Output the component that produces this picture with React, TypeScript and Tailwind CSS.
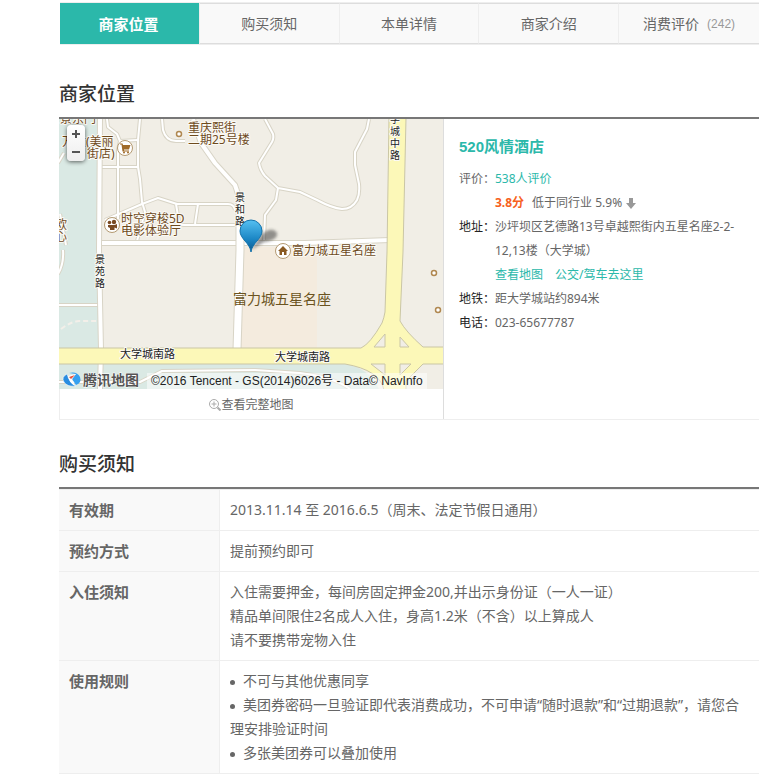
import type { ReactNode } from "react";

const tabs = ["商家位置", "购买须知", "本单详情", "商家介绍", "消费评价"];

const BROWN = "#6e4a1c";

const minorRoads = [
  "M107 119 L108 127 L117 134 L120 141 L118 150 V219",
  "M120 141 L138 140",
  "M102 167 H138",
  "M140 119 L138 140 V167 L140 179 L142 202 L145 212 L137 241",
  "M105 220 L142 204 L158 198 L177 204 H228 Q234 204 235 210",
  "M176 204 L179 222 Q180 225 184 225 H237",
  "M198 204 L195 224",
  "M162 119 L163 130 Q166 141 176 141 L185 141",
  "M265 119 L273 134 Q274 139 272 142 L259 163 Q260 170 265 176 L278 188 L300 192 L317 200 Q332 208 342 209 Q352 209 357 200 Q360 194 359 184 L355 165 V152 L367 129 L369 119",
  "M278 188 L276 200 L265 215 L264 241",
  "M59 305 H99",
  "M63 250 Q64 264 58 274",
  "M58 163 L64 153",
  "M60 214 L66 245",
  "M59 382 H140 L162 371 L255 370 L300 373 Q334 377 350 389",
];

function MapLabel({ x, y, size = 12, color = BROWN, children }: { x: number; y: number; size?: number; color?: string; children: ReactNode }) {
  return (
    <text x={x} y={y} fontSize={size} fill={color} stroke="#fbfaf5" strokeWidth="2" strokeLinejoin="round" paintOrder="stroke">
      {children}
    </text>
  );
}

function VerticalLabel({ x, y, text }: { x: number; y: number; text: string }) {
  return (
    <>
      {text.split("").map((ch, i) => (
        <MapLabel key={i} x={x} y={y + i * 12} size={10} color="#222">
          {ch}
        </MapLabel>
      ))}
    </>
  );
}

function Roads({ paths, width }: { paths: string[]; width: number }) {
  return (
    <g fill="none" strokeLinejoin="round">
      {paths.map((d) => (
        <path key={d} d={d} stroke="#d8d4c6" strokeWidth={width + 2} />
      ))}
      {paths.map((d) => (
        <path key={d} d={d} stroke="#fff" strokeWidth={width} />
      ))}
    </g>
  );
}

function CityMap() {
  return (
    <svg viewBox="59 119 384 270" className="block w-full" role="img" aria-label="地图">
      <defs>
        <linearGradient id="pin" x1="0" y1="0" x2="0" y2="1">
          <stop offset="0" stopColor="#56c0f2" />
          <stop offset="0.6" stopColor="#1b86c4" />
          <stop offset="1" stopColor="#0a568c" />
        </linearGradient>
        <filter id="soft" x="-50%" y="-50%" width="200%" height="200%">
          <feGaussianBlur stdDeviation="1.5" />
        </filter>
      </defs>
      <rect x="59" y="119" width="384" height="270" fill="#f1eee6" />
      <rect x="59" y="119" width="40" height="270" fill="#dae9e4" />
      <path d="M59 363 H342 Q370 368 379 389 H59 Z" fill="#dae9e4" />
      <path d="M243 247 H317 V348 H240 Z" fill="#f4ebde" />
      <Roads paths={minorRoads} width={2} />
      <path d="M61 329 Q70 322 79 321 H97" fill="none" stroke="#f3efe9" strokeWidth="2" strokeDasharray="5 3" />
      <Roads
        paths={[
          "M193 119 L201 143 L215 163 L235 185 L240 200",
          "M100 119 L99 250 L101 350 L100 389",
          "M102 243 H305 L390 240",
        ]}
        width={4}
      />
      <Roads paths={["M240 198 L240 250 L237 350"]} width={7} />

      <g fill="#fcf8b8" stroke="#cac6a5">
        <path d="M389 118 H406 L403 252 L400 321 Q406 332 423 347 H444 V364 H423 L406 381 V390 H384 Q380 370 345 364 H58 V348 H361 Q370 344 382 323 Q384 318 385 312 L387 252 Z" />
        <g fill="#f1eee6">
          <path d="M374 347 L385 334 V347 Z" />
          <path d="M400 337 L409 347 H400 Z" />
          <path d="M371 364 H385 V375 Z" />
          <path d="M400 364 H411 L400 375 Z" />
        </g>
      </g>

      <g fontFamily='"Noto Sans", "Noto Sans CJK SC", sans-serif'>
        <MapLabel x={60} y={123}>景东门</MapLabel>
        <MapLabel x={62} y={146}>万达(美丽</MapLabel>
        <MapLabel x={87} y={158}>街店)</MapLabel>
        <MapLabel x={188} y={132}>重庆熙街</MapLabel>
        <MapLabel x={188} y={144}>二期25号楼</MapLabel>
        <MapLabel x={121} y={223}>时空穿梭5D</MapLabel>
        <MapLabel x={121} y={235}>电影体验厅</MapLabel>
        <MapLabel x={55} y={229}>欧</MapLabel>
        <MapLabel x={55} y={241}>心</MapLabel>
        <MapLabel x={292} y={255}>富力城五星名座</MapLabel>
        <text x="233" y="304" fontSize="14" fill="#6b5320">富力城五星名座</text>
        <VerticalLabel x={235} y={201} text="景和路" />
        <VerticalLabel x={95} y={263} text="景苑路" />
        <VerticalLabel x={390} y={123} text="学城中路" />
        <MapLabel x={120} y={358} size={11} color="#222">大学城南路</MapLabel>
        <MapLabel x={275} y={361} size={11} color="#222">大学城南路</MapLabel>
      </g>

      <g fill="#fff" stroke="#b08850" strokeWidth="1.5">
        <circle cx="179" cy="134" r="2.5" />
        <circle cx="434" cy="273" r="2.5" />
        <circle cx="438" cy="310" r="2.5" />
      </g>
      <g fill="#fff" stroke="#b49a72">
        <circle cx="125" cy="148" r="7.5" />
        <circle cx="112" cy="225" r="7.5" />
        <circle cx="283" cy="251" r="7.5" />
      </g>
      <g fill="#a06a28">
        <path d="M120 143.500 H122.500 L123 145 H130.500 L129 149.500 H124 V150.500 H129 V151.500 H122.500 L121.500 144.500 H120 Z" />
        <circle cx="124" cy="152.500" r="1" />
        <circle cx="128" cy="152.500" r="1" />
      </g>
      <g fill="#7a4a22">
        <circle cx="109.500" cy="222.500" r="1.800" />
        <circle cx="114" cy="222" r="2.200" />
        <path d="M110 225 H114.500 L117 224 V228.500 L114.500 227.500 V230 H110 V228 L108 227 V225 Z" />
      </g>
      <path d="M283 246 L288 251 H286.500 V255 H284 V252 H282 V255 H279.500 V251 H278 Z" fill="#8a5a22" />

      <path d="M251 250 L262 234 Q272 226 277 233 Q278 240 264 242 Z" fill="#333" opacity="0.5" filter="url(#soft)" />
      <path d="M251 252 C250 243 240 239 240 231 A11 11 0 0 1 262 231 C262 239 252 243 251 252 Z" fill="url(#pin)" stroke="#1573ac" />

      <path d="M67 374 Q61 377 64 382 Q67 387 76 386 Q69 382 67 374 Z" fill="#2a8de0" stroke="#fff" strokeWidth="0.5" />
      <path d="M69 373 Q77 371 80 377 Q82 383 76 385 L72 379 L76 374 Z" fill="#35a0f0" />
      <path d="M68 376 L76 374 L72 379 L75 386 Q69 383 68 376 Z" fill="#fff" />
      <path d="M69 377 L75 375 L71 379 Z" fill="#e5533d" />
      <text x="83" y="385" fontSize="14" fontWeight="bold" fill="#555" stroke="#fff" strokeWidth="1" paintOrder="stroke" fontFamily='"Noto Sans CJK SC", sans-serif'>
        腾讯地图
      </text>
    </svg>
  );
}

function InfoRow({ label, dark = true, children }: { label: string; dark?: boolean; children: ReactNode }) {
  return (
    <div className="flex">
      <dt className={dark ? "w-9 shrink-0 text-[#222]" : "w-9 shrink-0"}>{label}</dt>
      <dd className="min-w-0 flex-1">{children}</dd>
    </div>
  );
}

function SectionTitle({ children }: { children: ReactNode }) {
  return <h2 className="border-b-2 border-[#777] pb-[11px] text-[19px] leading-6 font-medium text-[#333]">{children}</h2>;
}

function NoticeRow({ label, children }: { label: string; children: ReactNode }) {
  return (
    <tr className="align-top">
      <th scope="row" className="w-[161px] border-r border-b border-[#eee] bg-[#f9f9f9] px-2.5 py-2 text-left text-[15px] font-bold">
        {label}
      </th>
      <td className="border-b border-[#eee] px-2.5 py-2">{children}</td>
    </tr>
  );
}

function Bullet() {
  return <span className="mr-2 inline-block size-[5px] rounded-full bg-[#666] align-middle" />;
}

export default function App() {
  return (
    <div className="bg-white pt-[2px] pb-2 pl-[59px] font-['Noto_Sans','Noto_Sans_CJK_SC',sans-serif] text-sm leading-6 text-[#666]">
      <nav className="ml-px grid h-[43px] grid-cols-5 border-y border-[#eee]">
        {tabs.map((tab, i) => (
          <a
            key={tab}
            href={`#section-${i}`}
            className={
              i === 0
                ? "flex items-center justify-center border-r border-[#eee] bg-[#2bb8aa] pr-0.5 text-[15px] font-bold text-white"
                : "flex items-center justify-center border-y border-r border-y-[#ddd] border-r-[#eee] bg-[#f9f9f9] last:border-r-0"
            }
          >
            {tab}
            {i === 4 && <span className="ml-2 font-['Liberation_Sans',sans-serif] text-xs text-[#999]">(242)</span>}
          </a>
        ))}
      </nav>

      <section id="section-0" className="pt-[37px]">
        <SectionTitle>商家位置</SectionTitle>
        <div className="flex border-b border-[#eee]">
          <div className="w-[385px] shrink-0 border-r border-[#ddd]">
            <div className="relative">
              <CityMap />
              <div className="absolute top-1.5 left-2 flex h-9 w-[18px] flex-col rounded bg-gradient-to-b from-white to-[#eee] text-[#333] shadow-[0_1px_4px_rgba(0,0,0,0.6)]">
                <button type="button" aria-label="放大" className="flex flex-1 items-center justify-center">
                  <svg width="8" height="8" viewBox="0 0 8 8" stroke="#555" strokeWidth="2"><path d="M0 4H8M4 0V8" /></svg>
                </button>
                <button type="button" aria-label="缩小" className="flex flex-1 items-center justify-center">
                  <svg width="8" height="8" viewBox="0 0 8 8" stroke="#555" strokeWidth="2"><path d="M0 4H8" /></svg>
                </button>
              </div>
              <div className="absolute bottom-0 left-[88px] bg-white/50 px-1 font-['Liberation_Sans','Noto_Sans_CJK_SC',sans-serif] text-xs leading-4 whitespace-nowrap text-[#222]">
                ©2016 Tencent - GS(2014)6026号 - Data© NavInfo
              </div>
            </div>
            <a href="#map" className="flex h-[30px] items-center justify-center border-l border-[#eee] pt-0.5 text-xs">
              <svg width="12" height="12" viewBox="0 0 12 12" fill="none" stroke="#aaa">
                <circle cx="5" cy="5" r="4.500" />
                <path d="M2.500 5H7.500M5 2.500V7.500" />
                <path d="M8.500 8.500L11.500 11.500" strokeWidth="2" />
              </svg>
              查看完整地图
            </a>
          </div>
          <div className="min-w-0 flex-1 px-[15px] pt-4">
            <h3 className="font-['Liberation_Sans','Noto_Sans_CJK_SC',sans-serif] text-[15px] font-bold text-[#2bb8aa]">520风情酒店</h3>
            <dl className="pt-2 text-xs leading-6">
              <InfoRow label="评价：" dark={false}>
                <a href="#reviews" className="text-[#2bb8aa]">538人评价</a>
                <div className="flex items-center">
                  <strong className="mr-2 text-[#f76120]">3.8分</strong>
                  低于同行业 5.9%
                  <svg className="ml-1" width="10" height="11" viewBox="0 0 10 11" fill="#999">
                    <path d="M3 0H7V5H10L5 11L0 5H3Z" />
                  </svg>
                </div>
              </InfoRow>
              <InfoRow label="地址：">
                沙坪坝区艺德路13号卓越熙街内五星名座2-2-<wbr />12,13楼（大学城）
                <div className="flex gap-3 text-[#2bb8aa]">
                  <a href="#map">查看地图</a>
                  <a href="#route">公交/驾车去这里</a>
                </div>
              </InfoRow>
              <InfoRow label="地铁：">距大学城站约894米</InfoRow>
              <InfoRow label="电话：">023-65677787</InfoRow>
            </dl>
          </div>
        </div>
      </section>

      <section id="section-1" className="pt-8">
        <SectionTitle>购买须知</SectionTitle>
        <table className="w-full table-fixed border-separate border-spacing-0 border-t border-[#eee]">
          <tbody>
            <NoticeRow label="有效期">2013.11.14 至 2016.6.5（周末、法定节假日通用）</NoticeRow>
            <NoticeRow label="预约方式">提前预约即可</NoticeRow>
            <NoticeRow label="入住须知">
              <p>入住需要押金，每间房固定押金200,并出示身份证（一人一证）</p>
              <p>精品单间限住2名成人入住，身高1.2米（不含）以上算成人</p>
              <p>请不要携带宠物入住</p>
            </NoticeRow>
            <NoticeRow label="使用规则">
              <ul>
                <li><Bullet />不可与其他优惠同享</li>
                <li><Bullet />美团券密码一旦验证即代表消费成功，不可申请“随时退款”和“过期退款”，请您合理安排验证时间</li>
                <li><Bullet />多张美团券可以叠加使用</li>
              </ul>
            </NoticeRow>
          </tbody>
        </table>
      </section>
    </div>
  );
}
